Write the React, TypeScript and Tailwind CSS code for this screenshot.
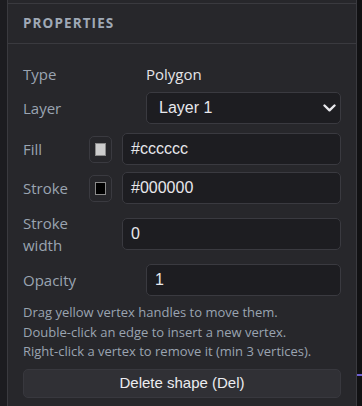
import React from "react";

const labelFont = { fontFamily: '"Open Sans", "Noto Sans", sans-serif' };
const ctrlFont = { fontFamily: '"Liberation Sans", Arial, sans-serif' };

function Swatch({ color }: { color: string }) {
  return (
    <div className="flex h-[27px] w-[23px] shrink-0 items-center justify-center rounded-[5px] border border-[#3a3a40] bg-[#26262a]">
      <div className="h-[13px] w-[11px] border border-[#8a8a8a]" style={{ background: color }} />
    </div>
  );
}

function TextInput({ value }: { value: string }) {
  return (
    <div
      className="flex h-[32px] flex-1 items-center rounded-[5px] border border-[#3a3a40] bg-[#1d1d21] pl-[8px] text-[16px] text-[#e8e8ec]"
      style={ctrlFont}
    >
      {value}
    </div>
  );
}

export default function App() {
  return (
    <div className="flex h-[406px] w-[362px] bg-[#1c1c20]">
      <div className="w-[7px] shrink-0 bg-[#1c1c20]" />
      <div className="flex w-[350px] shrink-0 flex-col border-x border-[#3a3a3f] bg-[#27272b]">
        <div className="h-[3px]" />
        <div className="flex h-[41px] items-center border-y border-[#3a3a3f] px-[15px]">
          <span className="text-[13.5px] font-bold tracking-[1.1px] text-[#9fa9b6]" style={labelFont}>
            PROPERTIES
          </span>
        </div>
        <div className="flex flex-col px-[15px] pt-[20px] text-[15px] text-[#9aa4b1]" style={labelFont}>
          <div className="flex h-[21px] items-center">
            <span className="w-[123px]">Type</span>
            <span className="text-[#e4e4e8]">Polygon</span>
          </div>
          <div className="mt-[7px] flex h-[32px] items-center">
            <span className="w-[123px]">Layer</span>
            <div
              className="flex h-[32px] flex-1 items-center justify-between rounded-[5px] border border-[#3a3a40] bg-[#1d1d21] pl-[12px] pr-[4px] text-[16px] text-[#e8e8ec]"
              style={ctrlFont}
            >
              <span>Layer 1</span>
              <svg width="13" height="8" viewBox="0 0 13 8" fill="none">
                <path d="M1.5 1.5 L6.5 6.3 L11.5 1.5" stroke="#e8e8ec" strokeWidth="2.4" strokeLinecap="round" strokeLinejoin="round" />
              </svg>
            </div>
          </div>
          <div className="mt-[9px] flex h-[32px] items-center">
            <span className="w-[66px]">Fill</span>
            <Swatch color="#cccccc" />
            <div className="w-[10px]" />
            <TextInput value="#cccccc" />
          </div>
          <div className="mt-[7px] flex h-[32px] items-center">
            <span className="w-[66px]">Stroke</span>
            <Swatch color="#000000" />
            <div className="w-[10px]" />
            <TextInput value="#000000" />
          </div>
          <div className="mt-[8px] flex h-[44px] items-center">
            <span className="w-[99px] leading-[22px]">
              Stroke
              <br />
              width
            </span>
            <TextInput value="0" />
          </div>
          <div className="mt-[8px] flex h-[32px] items-center">
            <span className="w-[123px]">Opacity</span>
            <TextInput value="1" />
          </div>
          <div className="mt-[7px] text-[13px] leading-[19.5px] text-[#9aa4b1]">
            <div>Drag yellow vertex handles to move them.</div>
            <div>Double-click an edge to insert a new vertex.</div>
            <div>Right-click a vertex to remove it (min 3 vertices).</div>
          </div>
          <div
            className="mt-[7px] flex h-[29px] items-center justify-center rounded-[5px] border border-[#38383e] bg-[#303035] text-[15px] text-[#ececf0]"
            style={ctrlFont}
          >
            Delete shape (Del)
          </div>
        </div>
      </div>
      <div className="flex w-[5px] shrink-0 flex-col bg-[#111113]">
        <div className="h-[374px]" />
        <div className="h-[2px] bg-[#6d5fd0]" />
      </div>
    </div>
  );
}
